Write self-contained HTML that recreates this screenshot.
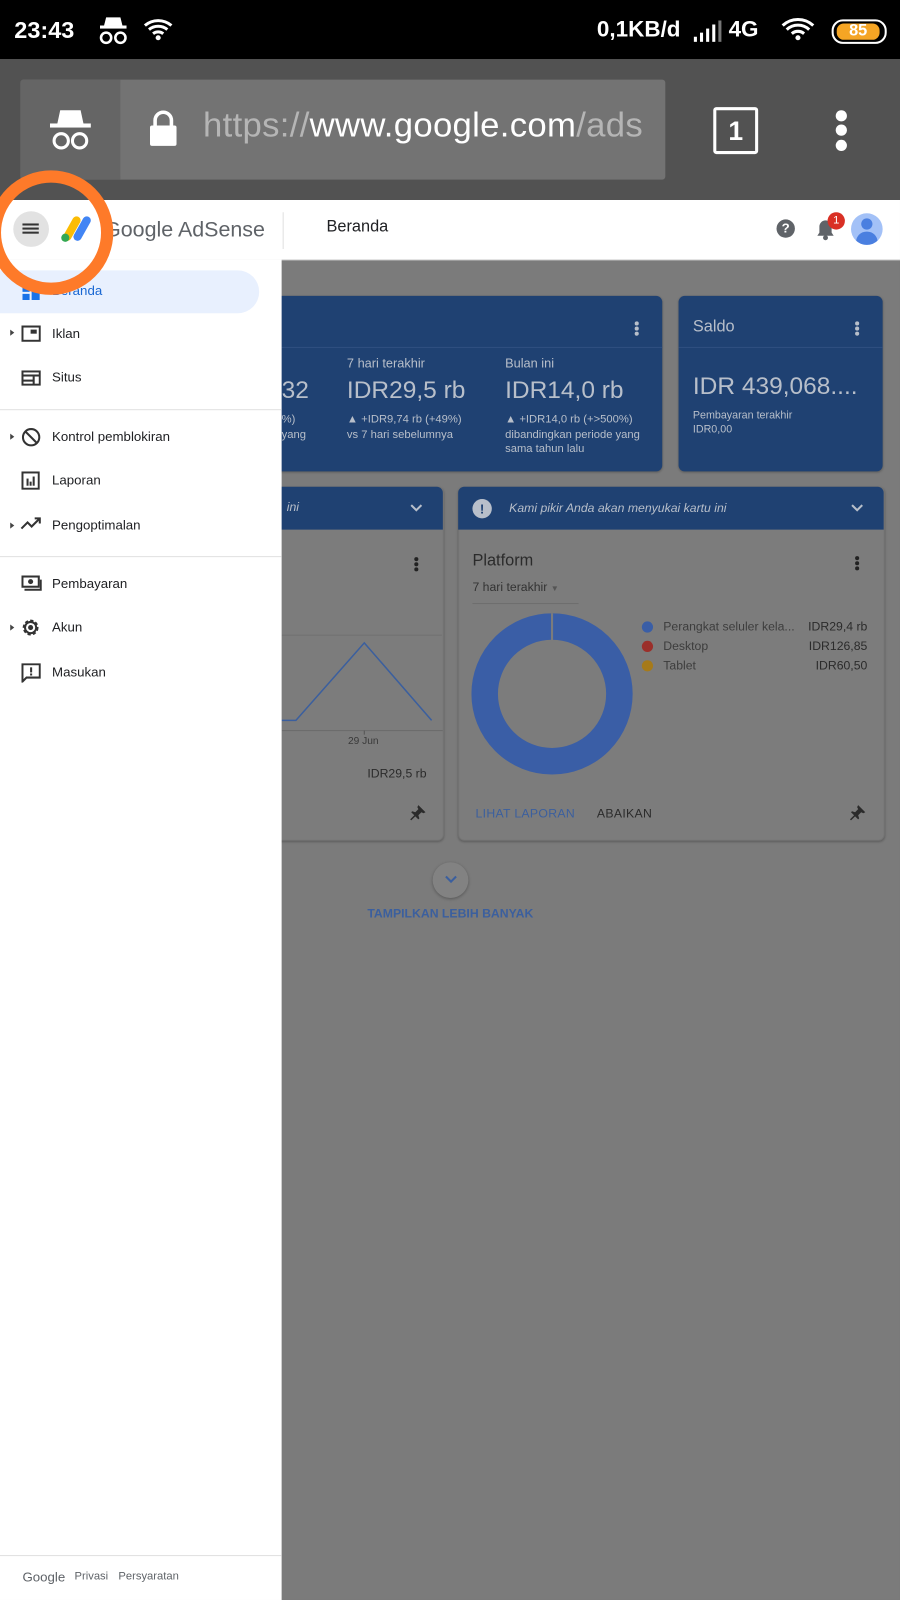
<!DOCTYPE html>
<html><head><meta charset="utf-8">
<style>
html,body{margin:0;padding:0;width:900px;height:1600px;overflow:hidden;background:#7a7a7a}
#w{position:absolute;left:0;top:0;width:882px;height:1568px;transform:scale(1.0204);transform-origin:0 0;font-family:"Liberation Sans",sans-serif;background:#7b7b7b}
.a{position:absolute;white-space:nowrap}
.card{position:absolute;border-radius:6px;box-shadow:0 1px 2px rgba(0,0,0,.25)}
.blue{background:#1f4172}
.lt{color:#b8bfca}
.di{color:#2b2b2b}
.nav{position:absolute;left:51px;font-size:13px;color:#202124}
.tri{position:absolute;left:10px;width:0;height:0;border-left:4px solid #444;border-top:3.5px solid transparent;border-bottom:3.5px solid transparent}
</style></head><body><div id="w">
<div class="a" style="left:0;top:0;width:882px;height:58px;background:#000"></div>
<div class="a" style="left:14px;top:16px;font-size:23px;font-weight:bold;color:#fff">23:43</div>
<svg class="a" style="left:94px;top:15px" width="34" height="30" viewBox="0 0 34 30"><path d="M10 2h14l2 8H8z" fill="#fff"/><rect x="4" y="10" width="26" height="3" fill="#fff"/><circle cx="10" cy="22" r="5" stroke="#fff" stroke-width="2.5" fill="none"/><circle cx="24" cy="22" r="5" stroke="#fff" stroke-width="2.5" fill="none"/></svg>
<svg class="a" style="left:140px;top:16px" width="32" height="26" viewBox="0 0 32 26"><path d="M2 9a20 20 0 0 1 26 0M6 13a14 14 0 0 1 18 0M10 17a8 8 0 0 1 10 0" stroke="#fff" stroke-width="3" fill="none"/><circle cx="15" cy="21" r="2.5" fill="#fff"/></svg>
<div class="a" style="left:585px;top:16px;font-size:22px;font-weight:bold;color:#fff">0,1KB/d</div>
<svg class="a" style="left:678px;top:20px" width="34" height="22"><rect x="2" y="16" width="3" height="5" fill="#fff"/><rect x="8" y="12" width="3" height="9" fill="#fff"/><rect x="14" y="8" width="3" height="13" fill="#fff"/><rect x="20" y="4" width="3" height="17" fill="#fff"/><rect x="26" y="0" width="3" height="21" fill="#777"/></svg>
<div class="a" style="left:714px;top:16px;font-size:22px;font-weight:bold;color:#fff">4G</div>
<svg class="a" style="left:765px;top:16px" width="40" height="26" viewBox="0 0 40 26"><path d="M2 9a22 22 0 0 1 30 0M6 13a16 16 0 0 1 22 0M11 17a9 9 0 0 1 12 0" stroke="#fff" stroke-width="3" fill="none"/><circle cx="17" cy="21" r="2.5" fill="#fff"/></svg>
<div class="a" style="left:815px;top:19px;width:50px;height:20px;border:2.5px solid #fff;border-radius:11px"></div>
<div class="a" style="left:820px;top:23px;width:42px;height:16px;background:#f5a524;border-radius:7px;font-size:16px;font-weight:bold;color:#fff;text-align:center;line-height:16px">85</div>
<div class="a" style="left:0;top:58px;width:882px;height:138px;background:#525252"></div>
<div class="a" style="left:20px;top:78px;width:632px;height:98px;background:#737373;border-radius:3px"></div>
<div class="a" style="left:20px;top:78px;width:98px;height:98px;background:#656565;border-radius:3px 0 0 3px"></div>
<svg class="a" style="left:46px;top:106px" width="46" height="44" viewBox="0 0 46 44"><path d="M13 2h20l3 14H10z" fill="#fff"/><rect x="3" y="15" width="40" height="4" fill="#fff"/><circle cx="14" cy="32" r="7" stroke="#fff" stroke-width="3" fill="none"/><circle cx="32" cy="32" r="7" stroke="#fff" stroke-width="3" fill="none"/></svg>
<svg class="a" style="left:146px;top:108px" width="28" height="36" viewBox="0 0 28 36"><path d="M6 16V10a8 8 0 0 1 16 0v6" stroke="#fff" stroke-width="3.5" fill="none"/><rect x="1" y="15" width="26" height="20" rx="2" fill="#fff"/></svg>
<div class="a" style="left:199px;top:104px;font-size:34px;letter-spacing:0.3px;color:#b5b5b5">https://<span style="color:#fff">www.google.com</span>/ads</div>
<div class="a" style="left:699px;top:105px;width:38px;height:40px;border:3.5px solid #fff;border-radius:3px;color:#fff;font-size:26px;font-weight:bold;text-align:center;line-height:40px">1</div>
<div class="a" style="left:819px;top:108px;width:11px;height:11px;border-radius:50%;background:#fff"></div>
<div class="a" style="left:819px;top:122px;width:11px;height:11px;border-radius:50%;background:#fff"></div>
<div class="a" style="left:819px;top:137px;width:11px;height:11px;border-radius:50%;background:#fff"></div>
<div class="a" style="left:0;top:196px;width:882px;height:58px;background:#fff;border-bottom:1px solid #ddd"></div>
<div class="a" style="left:13px;top:207px;width:35px;height:35px;border-radius:50%;background:#e2e2e2"></div>
<div class="a" style="left:22px;top:219px;width:16px;height:2px;background:#333;box-shadow:0 4px 0 #333,0 8px 0 #333"></div>
<svg class="a" style="left:58px;top:210px" width="34" height="28" viewBox="0 0 34 28"><line x1="17" y1="6" x2="8" y2="22" stroke="#fbbc04" stroke-width="8" stroke-linecap="round"/><line x1="27" y1="6" x2="18" y2="22" stroke="#4285f4" stroke-width="8" stroke-linecap="round"/><circle cx="6" cy="23" r="4" fill="#34a853"/></svg>
<div class="a" style="left:102px;top:214px;font-size:21px;color:#5f6368">Google AdSense</div>
<div class="a" style="left:277px;top:208px;width:1px;height:36px;background:#e0e0e0"></div>
<div class="a" style="left:320px;top:214px;font-size:16px;color:#202124">Beranda</div>
<div class="a" style="left:761px;top:215px;width:18px;height:18px;border-radius:50%;background:#5f6368;color:#fff;font-size:13px;font-weight:bold;text-align:center;line-height:18px">?</div>
<svg class="a" style="left:800px;top:214px" width="18" height="22" viewBox="0 0 18 22"><path d="M9 2a6 6 0 0 0-6 6v6l-2 3h16l-2-3V8a6 6 0 0 0-6-6z" fill="#5f6368"/><circle cx="9" cy="19" r="2.4" fill="#5f6368"/></svg>
<div class="a" style="left:811px;top:208px;width:17px;height:17px;border-radius:50%;background:#d93025;color:#fff;font-size:11px;text-align:center;line-height:17px">1</div>
<div class="a" style="left:834px;top:209px;width:31px;height:31px;border-radius:50%;background:#a3c1f7;overflow:hidden"><div style="position:absolute;left:10px;top:5px;width:11px;height:11px;border-radius:50%;background:#4a7fe0"></div><div style="position:absolute;left:5px;top:18px;width:21px;height:16px;border-radius:10px 10px 0 0;background:#4a7fe0"></div></div>

<div class="card blue" style="left:260px;top:290px;width:389px;height:172px"></div>
<div class="a" style="left:276px;top:340px;width:373px;height:1px;background:#2f4f80"></div>
<div class="a" style="left:622px;top:315px;width:4px;height:4px;border-radius:50%;background:#b8bfca;box-shadow:0 5px 0 #b8bfca,0 10px 0 #b8bfca"></div>
<div class="a lt" style="left:276px;top:369px;font-size:24px">32</div>
<div class="a lt" style="left:276px;top:405px;font-size:11px">%)</div>
<div class="a lt" style="left:276px;top:420px;font-size:11px">yang</div>
<div class="a lt" style="left:340px;top:349px;font-size:12.5px">7 hari terakhir</div>
<div class="a lt" style="left:340px;top:369px;font-size:24px">IDR29,5 rb</div>
<div class="a lt" style="left:340px;top:405px;font-size:11px">▲ +IDR9,74 rb (+49%)</div>
<div class="a lt" style="left:340px;top:420px;font-size:11px">vs 7 hari sebelumnya</div>
<div class="a lt" style="left:495px;top:349px;font-size:12.5px">Bulan ini</div>
<div class="a lt" style="left:495px;top:369px;font-size:24px">IDR14,0 rb</div>
<div class="a lt" style="left:495px;top:405px;font-size:11px">▲ +IDR14,0 rb (+&gt;500%)</div>
<div class="a lt" style="left:495px;top:420px;font-size:11px">dibandingkan periode yang</div>
<div class="a lt" style="left:495px;top:434px;font-size:11px">sama tahun lalu</div>

<div class="card blue" style="left:665px;top:290px;width:200px;height:172px"></div>
<div class="a" style="left:665px;top:340px;width:200px;height:1px;background:#2f4f80"></div>
<div class="a lt" style="left:679px;top:312px;font-size:16px">Saldo</div>
<div class="a" style="left:838px;top:315px;width:4px;height:4px;border-radius:50%;background:#b8bfca;box-shadow:0 5px 0 #b8bfca,0 10px 0 #b8bfca"></div>
<div class="a lt" style="left:679px;top:365px;font-size:24px">IDR 439,068....</div>
<div class="a lt" style="left:679px;top:401px;font-size:10.5px">Pembayaran terakhir</div>
<div class="a lt" style="left:679px;top:415px;font-size:10.5px">IDR0,00</div>

<div class="card" style="left:260px;top:477px;width:173px;height:345px;background:#7c7c7c;border:1px solid #737373"></div>
<div class="a blue" style="left:260px;top:477px;width:174px;height:42px;border-radius:6px 6px 0 0"></div>
<div class="a lt" style="left:281px;top:490px;font-size:12px;font-style:italic">ini</div>
<svg class="a" style="left:401px;top:493px" width="14" height="10"><path d="M2 2l5 5 5-5" stroke="#b8bfca" stroke-width="2" fill="none"/></svg>
<div class="a" style="left:406px;top:546px;width:4px;height:4px;border-radius:50%;background:#222;box-shadow:0 5px 0 #222,0 10px 0 #222"></div>
<div class="a" style="left:276px;top:622px;width:157px;height:1px;background:#707070"></div>
<svg class="a" style="left:276px;top:620px" width="158" height="100"><polyline points="0,86 14,86 81,10 147,86" stroke="#3b5f9e" stroke-width="1.5" fill="none"/><line x1="0" y1="96" x2="158" y2="96" stroke="#6a6a6a"/><line x1="81" y1="96" x2="81" y2="100" stroke="#555"/></svg>
<div class="a" style="left:341px;top:721px;font-size:10px;color:#3a3a3a">29 Jun</div>
<div class="a di" style="left:360px;top:751px;font-size:12px">IDR29,5 rb</div>
<svg class="a" style="left:400px;top:788px" width="18" height="18" viewBox="0 0 18 18"><path d="M10 1l7 7-2 1-2-1-3 3 1 3-1 1-3-3-4 4-1-1 4-4-3-3 1-1 3 1 3-3-1-2z" fill="#2b2b2b"/></svg>

<div class="card" style="left:449px;top:477px;width:416px;height:345px;background:#7c7c7c;border:1px solid #737373"></div>
<div class="a blue" style="left:449px;top:477px;width:417px;height:42px;border-radius:6px 6px 0 0"></div>
<div class="a" style="left:463px;top:489px;width:19px;height:19px;border-radius:50%;background:#b8bfca;color:#1f4172;font-size:13px;font-weight:bold;text-align:center;line-height:19px">!</div>
<div class="a lt" style="left:499px;top:491px;font-size:12px;font-style:italic">Kami pikir Anda akan menyukai kartu ini</div>
<svg class="a" style="left:833px;top:493px" width="14" height="10"><path d="M2 2l5 5 5-5" stroke="#b8bfca" stroke-width="2" fill="none"/></svg>
<div class="a di" style="left:463px;top:541px;font-size:16px">Platform</div>
<div class="a" style="left:838px;top:545px;width:4px;height:4px;border-radius:50%;background:#222;box-shadow:0 5px 0 #222,0 10px 0 #222"></div>
<div class="a" style="left:463px;top:568px;font-size:12px;color:#333">7 hari terakhir <span style="font-size:8px;color:#555">▼</span></div>
<div class="a" style="left:463px;top:591px;width:104px;height:1px;background:#6e6e6e"></div>
<svg class="a" style="left:462px;top:601px" width="160" height="160"><circle cx="79" cy="79" r="66" stroke="#3a5ea6" stroke-width="26" fill="none"/><line x1="79" y1="0" x2="79" y2="28" stroke="#7c7c7c" stroke-width="2"/></svg>
<div class="a" style="left:629px;top:609px;width:11px;height:11px;border-radius:50%;background:#3a5ea6"></div>
<div class="a" style="left:629px;top:628px;width:11px;height:11px;border-radius:50%;background:#9b2f2a"></div>
<div class="a" style="left:629px;top:647px;width:11px;height:11px;border-radius:50%;background:#a67a1a"></div>
<div class="a" style="left:650px;top:607px;font-size:12px;color:#3d3d3d">Perangkat seluler kela...</div>
<div class="a" style="left:650px;top:626px;font-size:12px;color:#3d3d3d">Desktop</div>
<div class="a" style="left:650px;top:645px;font-size:12px;color:#3d3d3d">Tablet</div>
<div class="a" style="left:760px;top:607px;width:90px;text-align:right;font-size:12px;color:#2b2b2b">IDR29,4 rb</div>
<div class="a" style="left:760px;top:626px;width:90px;text-align:right;font-size:12px;color:#2b2b2b">IDR126,85</div>
<div class="a" style="left:760px;top:645px;width:90px;text-align:right;font-size:12px;color:#2b2b2b">IDR60,50</div>
<div class="a" style="left:466px;top:790px;font-size:12px;color:#3b5f9e;letter-spacing:.3px">LIHAT LAPORAN</div>
<div class="a" style="left:585px;top:790px;font-size:12px;color:#2b2b2b;letter-spacing:.3px">ABAIKAN</div>
<svg class="a" style="left:831px;top:788px" width="18" height="18" viewBox="0 0 18 18"><path d="M10 1l7 7-2 1-2-1-3 3 1 3-1 1-3-3-4 4-1-1 4-4-3-3 1-1 3 1 3-3-1-2z" fill="#2b2b2b"/></svg>

<div class="a" style="left:424px;top:845px;width:35px;height:35px;border-radius:50%;background:#828282;box-shadow:0 1px 3px rgba(0,0,0,.3)"></div>
<svg class="a" style="left:435px;top:857px" width="14" height="10"><path d="M2 2l5 5 5-5" stroke="#3b5f9e" stroke-width="2" fill="none"/></svg>
<div class="a" style="left:360px;top:888px;font-size:12px;font-weight:bold;color:#3b5f9e">TAMPILKAN LEBIH BANYAK</div>

<div class="a" style="left:0;top:254px;width:276px;height:1314px;background:#fff"></div>
<div class="a" style="left:0;top:265px;width:254px;height:42px;background:#e8f0fe;border-radius:0 21px 21px 0"></div>
<svg class="a" style="left:22px;top:277px" width="17" height="17"><rect x="0" y="0" width="7" height="9" fill="#1a73e8"/><rect x="9" y="0" width="8" height="5" fill="#1a73e8"/><rect x="0" y="11" width="7" height="6" fill="#1a73e8"/><rect x="9" y="7" width="8" height="10" fill="#1a73e8"/></svg>
<div class="nav" style="top:277px;color:#1967d2">Beranda</div>
<div class="tri" style="top:323px"></div>
<svg class="a" style="left:21px;top:319px" width="19" height="16"><rect x="1" y="1" width="17" height="14" stroke="#333" stroke-width="2" fill="none"/><rect x="9" y="4" width="6" height="4" fill="#333"/></svg>
<div class="nav" style="top:319px">Iklan</div>
<svg class="a" style="left:21px;top:363px" width="19" height="15"><rect x="1" y="1" width="17" height="13" stroke="#333" stroke-width="2" fill="none"/><rect x="1" y="4" width="17" height="2" fill="#333"/><rect x="11" y="6" width="2" height="8" fill="#333"/><rect x="1" y="9" width="11" height="2" fill="#333"/></svg>
<div class="nav" style="top:362px">Situs</div>
<div class="a" style="left:0;top:401px;width:276px;height:1px;background:#e0e0e0"></div>
<div class="tri" style="top:425px"></div>
<svg class="a" style="left:21px;top:419px" width="19" height="19"><circle cx="9.5" cy="9.5" r="8" stroke="#333" stroke-width="2" fill="none"/><line x1="4" y1="4" x2="15" y2="15" stroke="#333" stroke-width="2"/></svg>
<div class="nav" style="top:420px">Kontrol pemblokiran</div>
<svg class="a" style="left:21px;top:462px" width="18" height="18"><rect x="1" y="1" width="16" height="16" stroke="#333" stroke-width="2" fill="none"/><rect x="5" y="7" width="2" height="7" fill="#333"/><rect x="8" y="10" width="2" height="4" fill="#333"/><rect x="11" y="5" width="2" height="9" fill="#333"/></svg>
<div class="nav" style="top:463px">Laporan</div>
<div class="tri" style="top:512px"></div>
<svg class="a" style="left:20px;top:506px" width="21" height="14"><polyline points="1,12 7,6 11,10 19,2" stroke="#333" stroke-width="2" fill="none"/><polyline points="14,2 19,2 19,7" stroke="#333" stroke-width="2" fill="none"/></svg>
<div class="nav" style="top:507px">Pengoptimalan</div>
<div class="a" style="left:0;top:545px;width:276px;height:1px;background:#e0e0e0"></div>
<svg class="a" style="left:21px;top:564px" width="20" height="16"><rect x="1" y="1" width="16" height="10" stroke="#333" stroke-width="2" fill="none"/><circle cx="9" cy="6" r="2.5" fill="#333"/><polyline points="3,14 19,14 19,4" stroke="#333" stroke-width="2" fill="none"/></svg>
<div class="nav" style="top:564px">Pembayaran</div>
<div class="tri" style="top:612px"></div>
<svg class="a" style="left:20px;top:605px" width="20" height="20" viewBox="0 0 20 20"><circle cx="10" cy="10" r="6.5" stroke="#333" stroke-width="2.5" stroke-dasharray="3 2" fill="none"/><circle cx="10" cy="10" r="5.5" stroke="#333" stroke-width="2" fill="none"/><circle cx="10" cy="10" r="2.5" fill="#333"/></svg>
<div class="nav" style="top:607px">Akun</div>
<svg class="a" style="left:21px;top:650px" width="19" height="19"><path d="M1 1h17v13H5l-4 4z" stroke="#333" stroke-width="2" fill="none"/><rect x="8.5" y="4" width="2" height="5" fill="#333"/><rect x="8.5" y="10" width="2" height="2" fill="#333"/></svg>
<div class="nav" style="top:651px">Masukan</div>
<div class="a" style="left:0;top:1524px;width:276px;height:1px;background:#e0e0e0"></div>
<div class="a" style="left:22px;top:1538px;font-size:13px;color:#5f6368">Google</div>
<div class="a" style="left:73px;top:1539px;font-size:11px;color:#5f6368">Privasi</div>
<div class="a" style="left:116px;top:1539px;font-size:11px;color:#5f6368">Persyaratan</div>

<svg class="a" style="left:-20px;top:155px" width="150" height="150"><circle cx="70" cy="73" r="55" stroke="#fe7a29" stroke-width="12" fill="none"/></svg>
</div></body></html>
